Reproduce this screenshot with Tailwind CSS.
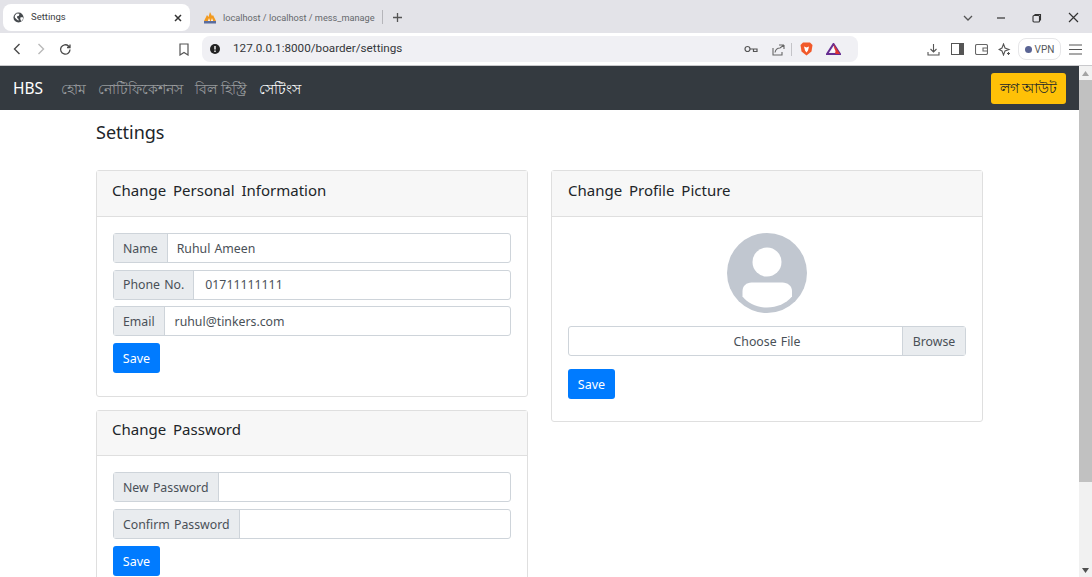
<!DOCTYPE html>
<html lang="en">
<head>
  <meta charset="UTF-8">
  <title>Settings</title>
  <script src="https://cdn.jsdelivr.net/npm/@tailwindcss/browser@4"></script>
</head>
<body class="h-[577px] w-[1092px] overflow-hidden bg-white font-['Noto_Sans',sans-serif] text-[#212529]">
  <!-- browser tab strip -->
  <div class="flex h-[33px] items-start bg-[#e3e3e8] pl-[3px] pt-[4px] text-[#3c4043]">
    <div class="flex h-[27px] w-[187px] items-center rounded-lg bg-white pl-[10px] pr-[6px] font-['Roboto',sans-serif] text-[9.5px]">
      <svg class="mr-[7px] h-[11px] w-[11px]" viewBox="0 0 12 12"><circle cx="6" cy="6" r="5.500" fill="#45494d"/><path d="M2 4l2-2.500 3 .5-.5 2-2 .5v2l1.500 1v2L3.500 7.500 2 6zM8 6l2.500-.5.500 2-2 2.500-1-2z" fill="#fff"/></svg>
      <span>Settings</span>
      <svg class="ml-auto h-[12px] w-[12px]" viewBox="0 0 12 12" fill="none" stroke="#333" stroke-width="1.500"><path d="M3 3l6 6M9 3l-6 6"/></svg>
    </div>
    <div class="flex h-[27px] w-[192px] items-center pl-[13px] font-['Roboto',sans-serif] text-[9.2px] text-[#66696d]">
      <svg class="mr-[6px] h-[13px] w-[14px]" viewBox="0 0 14 13"><path d="M1 10L4 4l1.500 2L7 1l2 4 1-1 3 6z" fill="#f29a1f"/><path d="M5 10l1-3 1 3zM8 10l1-3 1 3z" fill="#fff"/><rect x="1" y="10" width="12" height="2.500" fill="#5a6d9e"/></svg>
      <span class="w-[153px] whitespace-nowrap">localhost / localhost / mess_manage</span>
    </div>
    <div class="mt-[6px] h-[14px] w-px bg-[#b5b5ba]"></div>
    <svg class="mt-[8px] ml-[9px] h-[11px] w-[11px]" viewBox="0 0 11 11" stroke="#555" stroke-width="1.300"><path d="M5.500 1v9M1 5.500h9"/></svg>
    <div class="ml-auto mt-[8px] flex items-center pr-[13px]">
      <svg class="h-[10px] w-[12px]" viewBox="0 0 12 10" fill="none" stroke="#555" stroke-width="1.300"><path d="M2 3l4 4 4-4"/></svg>
      <svg class="ml-[22px] h-[10px] w-[10px]" viewBox="0 0 10 10" stroke="#333" stroke-width="1.200"><path d="M1 5h8"/></svg>
      <svg class="ml-[26px] h-[10px] w-[10px]" viewBox="0 0 10 10" fill="none" stroke="#333" stroke-width="1.100"><rect x="1" y="2.500" width="6.500" height="6.500" rx="1"/><path d="M3 2.500V1.500h5.500V7H7.500"/></svg>
      <svg class="ml-[26px] h-[11px] w-[11px]" viewBox="0 0 11 11" stroke="#333" stroke-width="1.200"><path d="M1 1l9 9M10 1l-9 9"/></svg>
    </div>
  </div>
  <!-- browser toolbar -->
  <div class="flex h-[33px] items-center border-b border-[#c9c9cc] bg-white text-[#55585c]">
    <svg class="ml-[12px] h-[12px] w-[10px]" viewBox="0 0 10 12" fill="none" stroke="#4a4a4a" stroke-width="1.400"><path d="M7.500 1l-5 5 5 5"/></svg>
    <svg class="ml-[14px] h-[12px] w-[10px]" viewBox="0 0 10 12" fill="none" stroke="#b9b9b9" stroke-width="1.400"><path d="M2.500 1l5 5-5 5"/></svg>
    <svg class="ml-[13px] h-[13px] w-[13px]" viewBox="0 0 13 13" fill="none" stroke="#4a4a4a" stroke-width="1.300"><path d="M11 6.500A4.700 4.700 0 1 1 9.500 3L11 4.500M11 1.500v3H8"/></svg>
    <svg class="ml-[107px] h-[13px] w-[10px]" viewBox="0 0 10 13" fill="none" stroke="#555" stroke-width="1.200"><path d="M1 1h8v11L5 9.500 1 12z"/></svg>
    <div class="ml-[13px] flex h-[26px] w-[656px] items-center rounded-lg bg-[#f0f0f4] pl-[8px] pr-[17px]">
      <svg class="h-[10px] w-[10px]" viewBox="0 0 10 10"><circle cx="5" cy="5" r="5" fill="#222"/><rect x="4.300" y="2" width="1.400" height="3.500" fill="#fff"/><rect x="4.300" y="6.500" width="1.400" height="1.500" fill="#fff"/></svg>
      <span class="ml-[13px] font-['Roboto',sans-serif] text-[11.7px] text-[#35373a]">127.0.0.1:8000/boarder/settings</span>
      <svg class="ml-auto h-[8px] w-[14px]" viewBox="0 0 14 8" fill="none" stroke="#555" stroke-width="1.200"><circle cx="3.500" cy="4" r="2.500"/><path d="M6 4h7v2.500H9.500V4"/></svg>
      <svg class="ml-[14px] h-[13px] w-[13px]" viewBox="0 0 13 13" fill="none" stroke="#666" stroke-width="1.100"><path d="M7 2h5v0M12 2v4M12 2L8 5C5 5 3.500 7 3 9.500M1 5v7h9V9"/></svg>
      <div class="ml-[6px] h-[13px] w-px bg-[#c4c4c8]"></div>
      <svg class="ml-[8px] h-[14px] w-[13px]" viewBox="0 0 13 14"><path d="M3 .5h7L12.500 3l-1 6.500L6.500 13.500 1.500 9.500.5 3z" fill="#f1592a"/><path d="M4 4.500l2.500 1 2.500-1-1 4-1.500 2-1.500-2z" fill="#fff"/></svg>
      <svg class="ml-[13px] h-[12px] w-[15px]" viewBox="0 0 15 12"><path d="M7.500 1L14 11H1z" fill="none" stroke="#662d91" stroke-width="2"/><path d="M7.500 1L14 11H9.500z" fill="#e0332f"/><path d="M5 8.500h5L7.500 5z" fill="#fff"/></svg>
    </div>
    <svg class="ml-[69px] h-[13px] w-[13px]" viewBox="0 0 13 13" fill="none" stroke="#555" stroke-width="1.100"><path d="M6.500 1v8M3.500 6l3 3 3-3M1 9v3h11V9"/></svg>
    <svg class="ml-[11px] h-[12px] w-[13px]" viewBox="0 0 13 12"><rect x=".5" y=".5" width="12" height="11" fill="#fff" stroke="#555"/><rect x="8" y="1" width="4" height="10" fill="#555"/></svg>
    <svg class="ml-[11px] h-[12px] w-[13px]" viewBox="0 0 13 12" fill="none" stroke="#666" stroke-width="1.100"><rect x=".5" y="1.500" width="12" height="10" rx="1.500"/><path d="M12 5H8v3h4M2 1.500h9"/></svg>
    <svg class="ml-[10px] h-[13px] w-[13px]" viewBox="0 0 13 13" fill="none" stroke="#555" stroke-width="1.100"><path d="M5.500 1L7 5l4 1.500-4 1.500-1.500 4L4 8 1 6.500 4 5z"/><path d="M10.500 9v3M9 10.500h3"/></svg>
    <div class="ml-[7px] flex h-[22px] w-[43px] items-center justify-center rounded-lg border border-[#e6e6e8] font-['Roboto',sans-serif] text-[10px] text-[#55585c]">
      <span class="mr-[3px] h-[7px] w-[7px] rounded-full bg-[#5a6494]"></span>VPN
    </div>
    <svg class="ml-[8px] h-[11px] w-[13px]" viewBox="0 0 13 11" stroke="#555" stroke-width="1.100"><path d="M0 1h13M0 5.500h13M0 10h13"/></svg>
  </div>
  <div class="flex h-[511px]">
    <div class="w-[1079px] shrink-0 overflow-hidden">
      <!-- navbar -->
      <nav class="flex h-[44px] items-center bg-[#343a40] pl-[13px] pr-[13px]">
        <span class="pt-[2px] text-[15.500px] text-white">HBS</span>
        <span class="ml-[18px] text-[14px] text-white/50">হোম</span>
        <span class="ml-[12px] text-[14px] text-white/50">নোটিফিকেশনস</span>
        <span class="ml-[12px] text-[14px] text-white/50">বিল হিস্ট্রি</span>
        <span class="ml-[12px] text-[14px] text-white">সেটিংস</span>
        <button class="ml-auto h-[31px] w-[75px] rounded-[3px] bg-[#ffc107] text-[13.500px] text-[#212529]">লগ আউট</button>
      </nav>
      <main class="px-[96px]">
        <h1 class="mt-[8px] text-[18px] leading-[28px]">Settings</h1>
        <div class="mt-[24px] grid grid-cols-[432px_432px] gap-x-[23px]">
          <div class="flex flex-col gap-[13px]">
            <section class="h-[227px] rounded-[3px] border border-[#dfdfdf]">
              <h2 class="flex h-[46px] items-center border-b border-[#dfdfdf] bg-[#f7f7f7] px-[15px] pb-[6px] text-[15px] [word-spacing:3px]">Change Personal Information</h2>
              <div class="flex flex-col gap-[6.670px] p-[16px]">
                <div class="flex h-[30px] rounded-[3px] border border-[#ced4da] text-[12.300px] [word-spacing:1px]">
                  <span class="flex items-center border-r border-[#ced4da] bg-[#e9ecef] pl-[9px] pr-[9px] pt-[2px] text-[#495057]">Name</span>
                  <span class="flex items-center px-[9px] pt-[2px] text-[#495057]">Ruhul Ameen</span>
                </div>
                <div class="flex h-[30px] rounded-[3px] border border-[#ced4da] text-[12.300px] [word-spacing:1px]">
                  <span class="flex items-center border-r border-[#ced4da] bg-[#e9ecef] pl-[9px] pr-[9px] pt-[2px] text-[#495057]">Phone No.</span>
                  <span class="flex items-center px-[11px] pt-[2px] text-[#495057]">01711111111</span>
                </div>
                <div class="flex h-[30px] rounded-[3px] border border-[#ced4da] text-[12.300px] [word-spacing:1px]">
                  <span class="flex items-center border-r border-[#ced4da] bg-[#e9ecef] pl-[9px] pr-[9px] pt-[2px] text-[#495057]">Email</span>
                  <span class="flex items-center px-[10px] pt-[2px] text-[#495057]">ruhul@tinkers.com</span>
                </div>
                <button class="h-[30px] w-[47px] rounded-[3px] bg-[#007bff] pt-[2px] text-[12.500px] text-white">Save</button>
              </div>
            </section>
            <section class="rounded-[3px] border border-[#dfdfdf]">
              <h2 class="flex h-[45px] items-center border-b border-[#dfdfdf] bg-[#f7f7f7] px-[15px] pb-[7px] text-[15px] [word-spacing:3px]">Change Password</h2>
              <div class="flex flex-col gap-[7px] p-[16px]">
                <div class="flex h-[30px] rounded-[3px] border border-[#ced4da] text-[12.300px] [word-spacing:1px]">
                  <span class="flex items-center border-r border-[#ced4da] bg-[#e9ecef] pl-[9px] pr-[9px] pt-[2px] text-[#495057]">New Password</span>
                </div>
                <div class="flex h-[30px] rounded-[3px] border border-[#ced4da] text-[12.300px] [word-spacing:1px]">
                  <span class="flex items-center border-r border-[#ced4da] bg-[#e9ecef] pl-[9px] pr-[9px] pt-[2px] text-[#495057]">Confirm Password</span>
                </div>
                <button class="h-[30px] w-[47px] rounded-[3px] bg-[#007bff] pt-[2px] text-[12.500px] text-white">Save</button>
              </div>
            </section>
          </div>
          <section class="h-[252px] rounded-[3px] border border-[#dfdfdf]">
            <h2 class="flex h-[46px] items-center border-b border-[#dfdfdf] bg-[#f7f7f7] px-[16px] pb-[6px] text-[15px] [word-spacing:3px]">Change Profile Picture</h2>
            <div class="flex flex-col p-[16px]">
              <svg class="mx-auto h-[80px] w-[80px]" viewBox="0 0 80 80">
                <circle cx="40" cy="40" r="40" fill="#c1c7d0"/>
                <circle cx="40" cy="29" r="14.500" fill="#fff"/>
                <path d="M15.500 58c0-5 4-8.500 9-8.500h31c5 0 9.500 3.500 9.500 8.500v5.500c-6 7-15 11-25 11s-19-4-24.500-11z" fill="#fff"/>
              </svg>
              <div class="mt-[13px] flex h-[30px] rounded-[3px] border border-[#ced4da] text-[12.300px] text-[#495057] [word-spacing:1px]">
                <span class="flex flex-1 items-center justify-center pl-[63px] pt-[3px]">Choose File</span>
                <span class="flex w-[63px] items-center justify-center border-l border-[#ced4da] bg-[#e9ecef] pt-[3px]">Browse</span>
              </div>
              <button class="mt-[13px] h-[30px] w-[47px] rounded-[3px] bg-[#007bff] pt-[3px] text-[12.500px] text-white">Save</button>
            </div>
          </section>
        </div>
      </main>
    </div>
    <!-- page scrollbar -->
    <div class="flex w-[13px] flex-col bg-[#f1f1f1]">
      <svg class="mx-auto mt-[5px] h-[5px] w-[7px]" viewBox="0 0 7 5"><path d="M3.500 0L7 5H0z" fill="#a3a3a3"/></svg>
      <div class="mt-[4px] h-[402px] bg-[#c1c1c1]"></div>
      <svg class="mx-auto mt-auto mb-[4px] h-[5px] w-[7px]" viewBox="0 0 7 5"><path d="M0 0h7L3.500 5z" fill="#505050"/></svg>
    </div>
  </div>
</body>
</html>
